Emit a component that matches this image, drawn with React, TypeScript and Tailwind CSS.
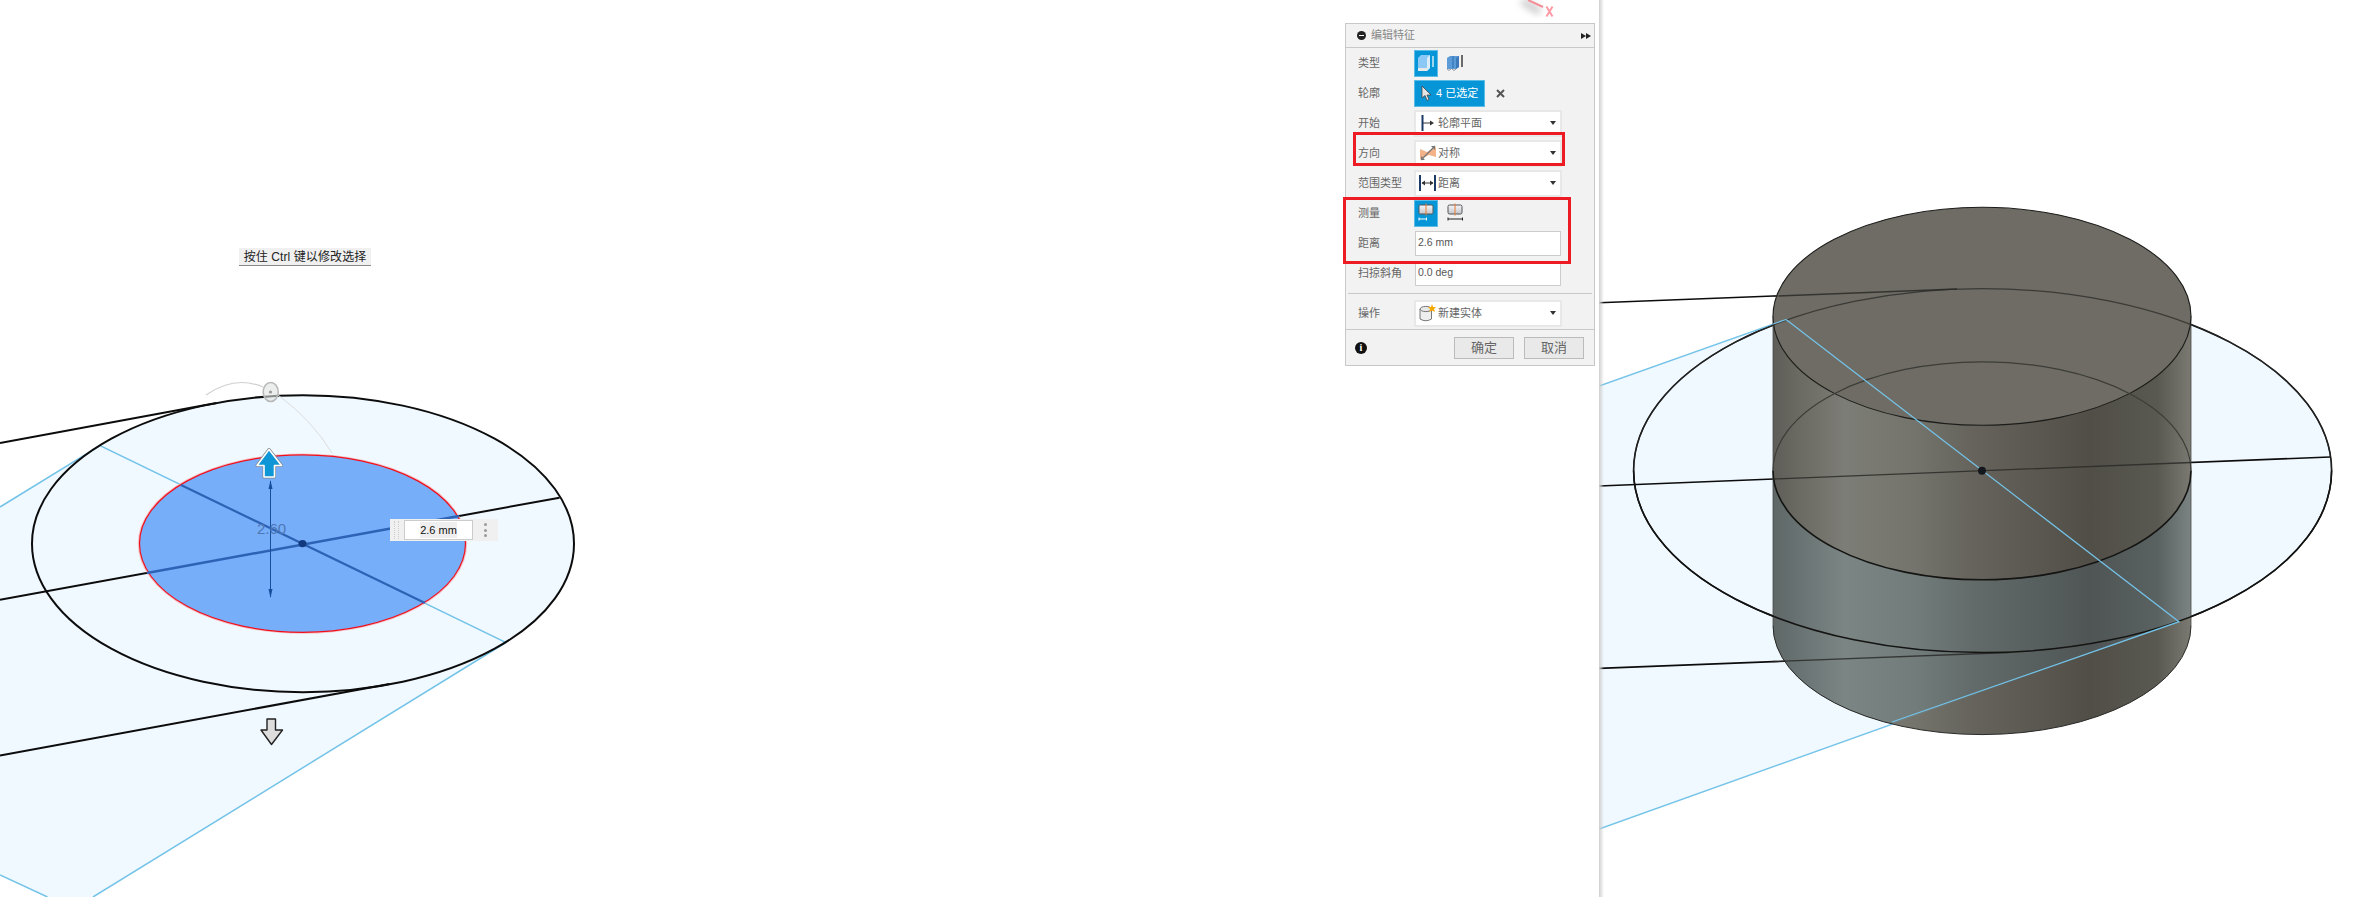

const cjk = "font-['Liberation_Sans','Noto_Sans_CJK_SC',sans-serif]";

function CylinderIcon() {
  return (
    <svg width="18" height="18" viewBox="0 0 18 18">
      <path d="M1 5 L1 15 Q7 18.5 12.5 15 L12.5 5 Z" fill="#eeeeee" stroke="#777" />
      <ellipse cx="6.8" cy="5" rx="5.7" ry="2.6" fill="#e8e8e8" stroke="#777" />
      <path d="M13 0 L14 3 L17 3 L15 5 L16 8 L13 6.5 L10.5 8 L11 5 L9 3 L12 3 Z" fill="#f5a800" />
    </svg>
  );
}

function StartIcon() {
  return (
    <svg width="14" height="16" viewBox="0 0 14 16">
      <path d="M1.5 0 V16" stroke="#1c3a66" strokeWidth="2" />
      <path d="M2 8 H10" stroke="#333" />
      <path d="M9 5.5 L13 8 L9 10.5 Z" fill="#333" />
    </svg>
  );
}

function SymmetricIcon() {
  return (
    <svg width="18" height="18" viewBox="0 0 18 18">
      <path d="M1 5 L8 8 V12 L1 15 Z M10 7 L17 3 V13 L10 11 Z M8 8 L10 7 V11 L8 12 Z" fill="#f2b389" />
      <path d="M2 16 L16 2" stroke="#777" strokeWidth="1.2" />
      <path d="M12 2 H16 V6 Z M2 12 V16 H6 Z" fill="#777" />
    </svg>
  );
}

function DistanceIcon() {
  return (
    <svg width="17" height="16" viewBox="0 0 17 16">
      <path d="M1 0 V16 M16 0 V16" stroke="#1c3a66" strokeWidth="2" />
      <path d="M3 8 H14" stroke="#333" />
      <path d="M6 5.5 L2.5 8 L6 10.5 Z M11 5.5 L14.5 8 L11 10.5 Z" fill="#333" />
    </svg>
  );
}

function MeasureIcon({ active }: { active?: boolean }) {
  const c = active ? "#ffffff" : "#222222";
  const id = active ? "mA" : "mB";
  return (
    <svg width="17" height="20" viewBox="0 0 17 20">
      <defs>
        <linearGradient id={id} x1="0" x2="0" y1="0" y2="1">
          <stop offset="0" stopColor="#f6f7fa" />
          <stop offset="1" stopColor="#c2c4ca" />
        </linearGradient>
      </defs>
      <rect x="1" y="2" width="14" height="9" rx="1.5" fill={`url(#${id})`} stroke="#555" />
      <path d="M8 0.5 V12.5" stroke="#ea7d2d" />
      <path d={active ? "M1 16 H8.5" : "M1 16 H15.5"} stroke={c} />
      <path d={active ? "M1 14.5 V17.5 M8.5 14.5 V17.5" : "M1 14.5 V17.5 M15.5 14.5 V17.5"} stroke={c} />
    </svg>
  );
}

function Caret() {
  return <span className="ml-auto mr-[4px] h-0 w-0 border-x-[3px] border-t-[4px] border-x-transparent border-t-[#333]" />;
}

function Label({ children }: { children: string }) {
  return <span className="w-[68px] shrink-0 whitespace-nowrap pl-[12px] text-[11px] text-[#666]">{children}</span>;
}

function Select({ icon, text }: { icon: React.ReactNode; text: string }) {
  return (
    <div className="flex h-[27px] w-[148px] items-center border-[2px] border-[#e8e8e8] bg-white pl-[1px]">
      <span className="flex w-[21px] shrink-0 items-center justify-center">{icon}</span>
      <span className="text-[11px] text-[#666]">{text}</span>
      <Caret />
    </div>
  );
}

function Field({ value }: { value: string }) {
  return (
    <div className="ml-[1px] flex h-[25px] w-[146px] items-center border border-[#cccccc] bg-white pl-[2px] text-[10.5px] text-[#555]">
      {value}
    </div>
  );
}

function Row({ label, children, className = "h-[30px]" }: { label: string; children: React.ReactNode; className?: string }) {
  return (
    <div className={`flex items-center ${className}`}>
      <Label>{label}</Label>
      {children}
    </div>
  );
}

function Panel() {
  return (
    <div className={`absolute left-[1345px] top-[23px] w-[250px] border border-[#c8c8c8] bg-[#f2f2f2] ${cjk}`}>
      <div className="flex h-[24px] items-center border-b border-[#c8c8c8] pl-[11px] pr-[3px]">
        <span className="flex h-[9px] w-[9px] items-center justify-center rounded-full bg-[#222]">
          <span className="h-[1.5px] w-[5px] bg-white" />
        </span>
        <span className="ml-[5px] text-[11px] text-[#888]">编辑特征</span>
        <svg className="ml-auto" width="10" height="6" viewBox="0 0 10 6">
          <path d="M0 0 L5 3 L0 6 Z M5 0 L10 3 L5 6 Z" fill="#222" />
        </svg>
      </div>
      <Row label="类型">
        <span className="flex h-[27px] w-[24px] items-center justify-center border border-[#5bbce8] bg-[#0696d7]">
          <svg width="18" height="20" viewBox="0 0 18 20">
            <path d="M1 5 L4 2 H13 V15 L10 18 H1 Z" fill="#8cc8f5" />
            <path d="M10 5 L13 2 V15 L10 18 Z" fill="#d8ecfa" />
            <path d="M1 15 H10 V18 H1 Z" fill="#e8e8e8" />
            <path d="M16 3 V14" stroke="#fff" strokeWidth="1.2" />
          </svg>
        </span>
        <span className="ml-[8px] flex items-center">
          <svg width="18" height="20" viewBox="0 0 18 20">
            <path d="M1 5 L4 3 H13 V14 L10 16 H1 Z" fill="#5b9bd8" />
            <path d="M7 3 V15" stroke="#2a6db0" />
            <path d="M10 5 L13 3 V14 L10 16 Z" fill="#3d78b8" />
            <path d="M1 16 Q3 19 5 16 M6 16 Q8 19 10 16" stroke="#999" fill="none" />
            <path d="M16 2 V14" stroke="#111" strokeWidth="1.2" />
          </svg>
        </span>
      </Row>
      <Row label="轮廓">
        <span className="flex h-[27px] w-[71px] items-center border border-[#5bbce8] bg-[#0696d7] pl-[6px] text-[11px] text-white">
          <svg width="11" height="17" viewBox="0 0 11 17">
            <path d="M1 1 L1 13 L4 10.5 L6 15.5 L8 14.5 L6 10 L10 10 Z" fill="#e4e4e4" stroke="#444" strokeWidth="0.8" />
          </svg>
          <span className="ml-[4px] whitespace-nowrap">4 已选定</span>
        </span>
        <svg className="ml-[11px]" width="9" height="9" viewBox="0 0 9 9">
          <path d="M1 1 L8 8 M8 1 L1 8" stroke="#555" strokeWidth="2" />
        </svg>
      </Row>
      <Row label="开始"><Select icon={<StartIcon />} text="轮廓平面" /></Row>
      <Row label="方向"><Select icon={<SymmetricIcon />} text="对称" /></Row>
      <Row label="范围类型"><Select icon={<DistanceIcon />} text="距离" /></Row>
      <Row label="测量">
        <span className="flex h-[27px] w-[24px] items-center justify-center border border-[#5bbce8] bg-[#0696d7]">
          <MeasureIcon active />
        </span>
        <span className="ml-[9px] flex items-center"><MeasureIcon /></span>
      </Row>
      <Row label="距离"><Field value="2.6 mm" /></Row>
      <Row label="扫掠斜角"><Field value="0.0 deg" /></Row>
      <div className="mx-[2px] h-[6px] border-b border-[#c8c8c8]" />
      <Row label="操作" className="h-[35px] pt-[3px]"><Select icon={<CylinderIcon />} text="新建实体" /></Row>
      <div className="flex h-[36px] items-center border-t border-[#c8c8c8] pl-[9px]">
        <span className="flex h-[12px] w-[12px] items-center justify-center rounded-full bg-[#111] font-['Liberation_Serif',serif] text-[10px] font-bold text-white">i</span>
        <button className="ml-[87px] h-[22px] w-[60px] border border-[#bbbbbb] bg-[#e9e9e9] text-[13px] text-[#666]">确定</button>
        <button className="ml-[10px] h-[22px] w-[60px] border border-[#bbbbbb] bg-[#e9e9e9] text-[13px] text-[#666]">取消</button>
      </div>
    </div>
  );
}

function LeftDrawing() {
  return (
    <svg className="absolute inset-0" width="1599" height="897" viewBox="0 0 1599 897">
      <defs>
        <filter id="axisBlur" x="-50%" y="-50%" width="200%" height="200%"><feGaussianBlur stdDeviation="3.5" /></filter>
      </defs>
      <path d="M1522 1 L1540 12" stroke="#8a8a8a" strokeWidth="7" opacity="0.45" filter="url(#axisBlur)" />
      <path d="M1528 0 L1543 7" stroke="#f28f98" strokeWidth="2" />
      <path d="M1546.5 6.5 L1552.5 16.5 M1552.5 6.5 L1546.5 16.5" stroke="#ff9aa5" strokeWidth="2" />

      <polygon points="0,507 100,445.6 506,642.5 93,897 47.5,897 0,875" fill="#f0f9ff" />
      <ellipse cx="303" cy="543.7" rx="271" ry="148.5" fill="#f0f9ff" />
      <path d="M0 507 L100 445.6 L506 642.5 L93 897 M0 875 L47.5 897" fill="none" stroke="#74c3e8" strokeWidth="1.5" />
      <path d="M0 443 L216.5 403 M0 599.7 L559.5 497.7 M0 755.5 L389.5 684" stroke="#0c0c0c" strokeWidth="2" fill="none" />
      <ellipse cx="303" cy="543.7" rx="271" ry="148.5" fill="none" stroke="#0c0c0c" strokeWidth="2" />

      <ellipse cx="302.5" cy="543.6" rx="163.5" ry="89" fill="none" stroke="#f5c0c4" strokeWidth="2.4" />
      <ellipse cx="302.5" cy="543.6" rx="163" ry="88.7" fill="#76aefa" stroke="#f0101c" strokeWidth="1.2" />
      <path d="M181 485 L425 603" stroke="#2e62b4" strokeWidth="2.2" />
      <path d="M147 573 L459 516" stroke="#2e62b4" strokeWidth="2.4" />
      <ellipse cx="302.5" cy="543.6" rx="4" ry="3.6" fill="#113a80" />

      <path d="M270.5 481 V597" stroke="#174f9c" strokeWidth="1" />
      <path d="M270.5 480 L268.5 489 H272.5 Z M270.5 598 L268.5 589 H272.5 Z" fill="#174f9c" />

      <path d="M206 395 Q235 375 263 387" fill="none" stroke="#cfcfcf" strokeWidth="1.2" />
      <path d="M278 395 Q312 420 332 453" fill="none" stroke="#dddddd" strokeWidth="1" />
      <ellipse cx="270.7" cy="392" rx="7.5" ry="9.5" fill="#dfe2e2" fillOpacity="0.6" stroke="#b8b8b8" strokeWidth="1.6" />
      <circle cx="270.5" cy="392" r="1.6" fill="#999" />

      <path d="M269 449.5 L281.5 465.5 H274.5 V477 H264 V465.5 H257 Z" fill="#0f96d6" stroke="#7d8890" strokeWidth="3" strokeLinejoin="round" />
      <path d="M269 449.5 L281.5 465.5 H274.5 V477 H264 V465.5 H257 Z" fill="#0f96d6" stroke="#ffffff" strokeWidth="1.6" strokeLinejoin="round" />

      <path d="M267 719 H275.5 V730 H282.5 L271.5 744.5 L261 730 H267 Z" fill="#dddddd" stroke="#222222" strokeWidth="1.4" strokeLinejoin="round" />
    </svg>
  );
}

function RightDrawing() {
  return (
    <svg className="absolute inset-0" width="773" height="897" viewBox="1599 0 773 897">
      <defs>
        <linearGradient id="warm" x1="1773" x2="2191" y1="0" y2="0" gradientUnits="userSpaceOnUse">
          <stop offset="0" stopColor="#5f5d57" />
          <stop offset="0.06" stopColor="#6a6962" />
          <stop offset="0.17" stopColor="#7c7d76" />
          <stop offset="0.34" stopColor="#74746c" />
          <stop offset="0.48" stopColor="#65635b" />
          <stop offset="0.76" stopColor="#504e47" />
          <stop offset="0.92" stopColor="#5a5951" />
          <stop offset="1" stopColor="#7a7a72" />
        </linearGradient>
        <linearGradient id="cool" x1="1773" x2="2191" y1="0" y2="0" gradientUnits="userSpaceOnUse">
          <stop offset="0" stopColor="#5f6766" />
          <stop offset="0.06" stopColor="#687272" />
          <stop offset="0.17" stopColor="#7a8584" />
          <stop offset="0.34" stopColor="#717c7b" />
          <stop offset="0.48" stopColor="#626b6a" />
          <stop offset="0.76" stopColor="#4f5555" />
          <stop offset="0.92" stopColor="#5a6161" />
          <stop offset="1" stopColor="#7b8383" />
        </linearGradient>
        <clipPath id="planeClip">
          <polygon points="1599,386 1786,319.5 2179,621.7 1599,829" />
          <ellipse cx="1982.6" cy="470.6" rx="349" ry="182" />
        </clipPath>
      </defs>

      <polygon points="1599,386 1786,319.5 2179,621.7 1599,829" fill="#f0f9ff" />
      <ellipse cx="1982.6" cy="470.6" rx="349" ry="182" fill="#f0f9ff" />

      <path d="M1599 302.8 L1957 289 M1599 486 L2330 457 M1599 668.4 L2008.7 652.5" stroke="#0c0c0c" strokeWidth="1.6" fill="none" />
      <ellipse cx="1982.6" cy="470.6" rx="349" ry="182" fill="none" stroke="#0c0c0c" strokeWidth="1.6" />
      <path d="M1599 386 L1786 319.5 M2179 621.7 L1599 829" stroke="#74c3e8" strokeWidth="1.4" fill="none" />

      <path d="M1773 316 V625.6 A209 109 0 0 0 2191 625.6 V316 Z" fill="url(#warm)" />
      <path d="M1773 470.8 A209 109 0 0 0 2191 470.8 V625.6 A209 109 0 0 1 1773 625.6 Z" fill="url(#cool)" clipPath="url(#planeClip)" />
      <path d="M1773 625.6 A209 109 0 0 0 2191 625.6" fill="none" stroke="#2a2a28" strokeWidth="1" />
      <path d="M1773 316 V625.6 M2191 316 V625.6" stroke="#4a4a46" strokeWidth="0.8" />

      <ellipse cx="1982" cy="316.3" rx="209" ry="109" fill="#6e6c64" stroke="#1c1c1a" strokeWidth="1.1" />

      <path d="M1773 470.8 A209 109 0 0 1 2191 470.8" fill="none" stroke="#3c3c38" strokeWidth="1.2" />
      <path d="M1773 470.8 A209 109 0 0 0 2191 470.8" fill="none" stroke="#141412" strokeWidth="1.6" />

      <path d="M1773 296.2 L1957 289 M1773 479 L2191 462.5 M1773 661.5 L2008.7 652.5" stroke="#2a2a28" strokeWidth="1.3" fill="none" opacity="0.85" />
      <path d="M1633.6 470.6 A349 182 0 0 1 2331.6 470.6" fill="none" stroke="#2a2a28" strokeWidth="1.2" opacity="0.75" />
      <path d="M1633.6 470.6 A349 182 0 0 0 2331.6 470.6" fill="none" stroke="#141412" strokeWidth="1.5" />
      <path d="M1786 319.5 L2179 621.7 L1892 722" stroke="#74c3e8" strokeWidth="1.3" fill="none" />
      <path d="M1773 324 L1786 319.5" stroke="#74c3e8" strokeWidth="1.3" />
      <ellipse cx="1982" cy="470.8" rx="4" ry="4" fill="#14181c" />
    </svg>
  );
}

export default function App() {
  return (
    <div className="flex h-[897px] w-[2372px] overflow-hidden bg-white">
      <div className="relative h-full w-[1599px] shrink-0">
        <LeftDrawing />
        <Panel />
        <div className={`absolute left-[239px] top-[248px] flex h-[18px] w-[132px] items-center justify-center whitespace-nowrap border-b border-[#888888] bg-[#f0f0f0] text-[12px] tracking-[0.1px] text-[#222] ${cjk}`}>
          按住 Ctrl 键以修改选择
        </div>
        <div className="absolute left-[390px] top-[519px] flex h-[22px] w-[108px] items-center bg-[#f0f0f0] pl-[4px]">
          <span className="h-[18px] w-[5px] border-x border-dotted border-[#cccccc]" />
          <div className="ml-[5px] flex h-[20px] w-[69px] items-center justify-center border border-[#cccccc] bg-white font-['Liberation_Sans',sans-serif] text-[11px] text-[#111]">
            <span className="bg-[#efefef]">2.6 mm</span>
          </div>
          <div className="ml-[11px] flex flex-col gap-[2.5px]">
            <span className="h-[3px] w-[3px] rounded-full bg-[#999]" />
            <span className="h-[3px] w-[3px] rounded-full bg-[#999]" />
            <span className="h-[3px] w-[3px] rounded-full bg-[#999]" />
          </div>
        </div>
        <div className="absolute left-[257px] top-[521px] font-['Liberation_Sans',sans-serif] text-[15px] leading-none text-[#4f76b4]">2.60</div>
        <div className="absolute left-[1353px] top-[132px] h-[34px] w-[212px] border-[3px] border-[#ed1c24]" />
        <div className="absolute left-[1343px] top-[197px] h-[67px] w-[228px] border-[3px] border-[#ed1c24]" />
      </div>
      <div className="relative h-full flex-1">
        <RightDrawing />
        <div className="absolute inset-y-0 left-0 w-[5px] bg-gradient-to-r from-[#cfcfcf] to-transparent" />
      </div>
    </div>
  );
}
